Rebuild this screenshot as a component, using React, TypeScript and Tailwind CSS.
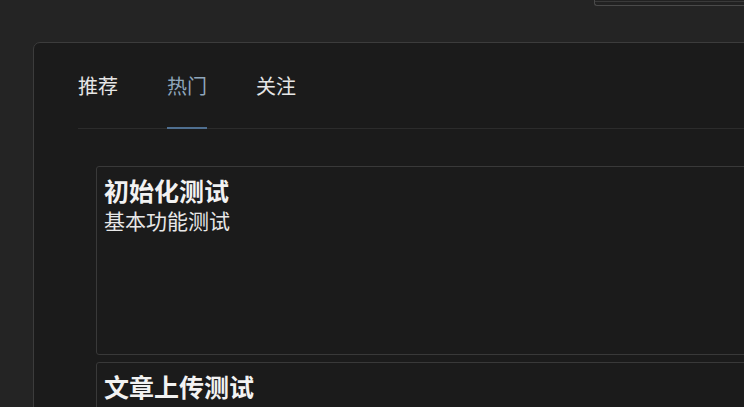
const tabs = ['推荐', '热门', '关注'];

const posts = [
  { title: '初始化测试', desc: '基本功能测试' },
  { title: '文章上传测试', desc: '上传功能测试' },
];

export default function App() {
  const active = 1;

  return (
    <div className="w-[744px] h-[407px] overflow-hidden bg-[#242424] font-['Noto_Sans_CJK_SC','Noto_Sans',sans-serif]">
      {/* search box above, mostly scrolled out of view */}
      <div className="flex h-[6px] justify-end">
        <div className="w-[150px] h-[6px] rounded-bl-[3px] border-b border-l border-[#4a4a4a] bg-[#222222]">
          <div className="mt-[1px] h-px bg-[#3a3a3a]" />
        </div>
      </div>

      <div className="ml-[33px] mt-[36px] w-[780px] rounded-[7px] border border-[#3c3c3c] bg-[#1b1b1b] pl-[44px] pt-[29px]">
        {/* tabs */}
        <div className="flex gap-[49px] border-b border-[#2c2c2c]">
          {tabs.map((t, i) => (
            <div
              key={t}
              className={
                i === active
                  ? '-mb-px border-b-2 border-[#4f6f90] pb-[27px] text-[20px] leading-[28px] text-[#8fa6bb]'
                  : 'pb-[28px] text-[20px] leading-[28px] text-[#e6e6e6]'
              }
            >
              {t}
            </div>
          ))}
        </div>

        {/* post list */}
        <div className="flex flex-col gap-[7px] pl-[18px] pt-[37px]">
          {posts.map((p) => (
            <div
              key={p.title}
              className="h-[189px] rounded-[3px] border border-[#393939] bg-[#1b1b1b] px-[7px] pt-[8px]"
            >
              <div className="text-[25px] font-bold leading-[31px] text-[#f2f2f2]">{p.title}</div>
              <div className="text-[21px] leading-[28px] text-[#e8e8e8]">{p.desc}</div>
            </div>
          ))}
        </div>
      </div>
    </div>
  );
}
